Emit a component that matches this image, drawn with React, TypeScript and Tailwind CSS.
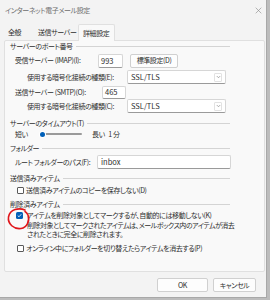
import React from "react";

const F = "[font-family:'Noto_Sans_CJK_JP','Noto_Sans',sans-serif] [font-feature-settings:'palt']";

function Header({ text, mt = 0 }: { text: string; mt?: number }) {
  return (
    <div className="flex items-center h-[10px] gap-[3px] w-[220px]" style={{ marginTop: mt }}>
      <span className="whitespace-nowrap">{text}</span>
      <div className="flex-1 h-px bg-[#d4d4d4]" />
    </div>
  );
}

function Box({ checked = false }: { checked?: boolean }) {
  if (checked)
    return (
      <div className="w-[7px] h-[7px] rounded-[1.5px] bg-[#005fb8] flex items-center justify-center shrink-0">
        <svg width="5" height="5" viewBox="0 0 10 10">
          <path d="M1.5 5.2 L4 7.6 L8.6 2.4" fill="none" stroke="white" strokeWidth="1.6" />
        </svg>
      </div>
    );
  return <div className="w-[7px] h-[7px] rounded-[1px] border border-[#5a5a5a] bg-white shrink-0" />;
}

function Select({ value }: { value: string }) {
  return (
    <div className="w-[99px] h-[14px] bg-white border border-[#d6d6d6] border-b-[#9a9a9a] rounded-[2px] flex items-center justify-between pl-[3px] pr-[3px]">
      <span className="text-[7.5px] tracking-normal">{value}</span>
      <div className="w-[8px] h-[9px] flex items-center justify-center border border-[#e2e2e2] rounded-[1px]">
        <svg width="5" height="4" viewBox="0 0 10 8">
          <path d="M1.5 2 L5 5.5 L8.5 2" fill="none" stroke="#7a7a7a" strokeWidth="1.2" />
        </svg>
      </div>
    </div>
  );
}

export default function App() {
  return (
    <div className={`w-[270px] h-[300px] bg-[#bcbcbc] ${F} text-[7px] tracking-[-0.4px] leading-none text-[#2e2e2e]`}>
      <div className="w-[267px] h-[298px] bg-[#f3f3f3] border-r border-b border-[#a8a8a8] flex flex-col relative">
        {/* title bar */}
        <div className="h-[20px] flex items-center justify-between pl-[5px] pr-[4px]">
          <span className="text-[#6e6e6e] text-[7px] whitespace-nowrap">インターネット電子メール設定</span>
          <svg width="7" height="7" viewBox="0 0 10 10">
            <path d="M1 1 L9 9 M9 1 L1 9" stroke="#8a8a8a" strokeWidth="0.9" />
          </svg>
        </div>
        {/* tabs */}
        <div className="h-[20px] flex items-end pl-[4px]">
          <div className="h-[16px] flex items-center pl-[4px] w-[30px] whitespace-nowrap">全般</div>
          <div className="h-[16px] flex items-center pl-[4px] w-[44px] whitespace-nowrap">送信サーバー</div>
          <div className="h-[17px] w-[37px] flex items-center pl-[4px] bg-[#f9f9f9] border border-b-0 border-[#e0e0e0] rounded-t-[2px] relative top-[1px] z-10 whitespace-nowrap">
            詳細設定
          </div>
        </div>
        {/* panel */}
        <div className="ml-[4px] w-[261px] h-[232px] bg-[#f9f9f9] border border-[#e0e0e0] rounded-[2px] relative">
          <div className="pl-[5px] flex flex-col">
            <Header text="サーバーのポート番号" />
            {/* IMAP */}
            <div className="h-[19px] flex items-center">
              <span className="ml-[5px] w-[83px] whitespace-nowrap">受信サーバー (IMAP)(I):</span>
              <div className="w-[25px] h-[14px] bg-white border border-[#d6d6d6] border-b-[#9a9a9a] rounded-[2px] flex items-center pl-[2px] text-[7.5px] tracking-normal">993</div>
              <div className="ml-[7px] w-[48px] h-[14px] bg-[#fdfdfd] border border-[#d0d0d0] rounded-[2px] flex items-center justify-center whitespace-nowrap">標準設定(D)</div>
            </div>
            <div className="h-[14px] flex items-center">
              <span className="ml-[17px] w-[100px] whitespace-nowrap">使用する暗号化接続の種類(E):</span>
              <Select value="SSL/TLS" />
            </div>
            <div className="h-[16px] flex items-center">
              <span className="ml-[5px] w-[87px] whitespace-nowrap">送信サーバー (SMTP)(O):</span>
              <div className="w-[24px] h-[13px] bg-white border border-[#d6d6d6] border-b-[#9a9a9a] rounded-[2px] flex items-center pl-[2px] text-[7.5px] tracking-normal">465</div>
            </div>
            <div className="h-[12px] flex items-center">
              <span className="ml-[17px] w-[100px] whitespace-nowrap">使用する暗号化接続の種類(C):</span>
              <Select value="SSL/TLS" />
            </div>
            <Header text="サーバーのタイムアウト(T)" mt={6} />
            <div className="h-[12px] flex items-center">
              <span className="ml-[5px] w-[25px]">短い</span>
              <div className="w-[42px] h-[2px] bg-[#9a9a9a] rounded-full flex items-center">
                <div className="w-[5px] h-[5px] rounded-full bg-[#005fb8] ring-1 ring-white" />
              </div>
              <span className="ml-[10px] whitespace-nowrap">長い&nbsp;&nbsp;&nbsp;1&nbsp;分</span>
            </div>
            <Header text="フォルダー" mt={3} />
            <div className="h-[18px] flex items-center">
              <span className="ml-[5px] w-[82px] whitespace-nowrap">ルート フォルダーのパス(F):</span>
              <div className="w-[134px] h-[14px] bg-white border border-[#d6d6d6] border-b-[#9a9a9a] rounded-[2px] flex items-center pl-[3px] text-[7.5px] tracking-normal">inbox</div>
            </div>
            <Header text="送信済みアイテム" mt={2} />
            <div className="h-[14px] flex items-center">
              <div className="ml-[7px]"><Box /></div>
              <span className="ml-[2px] whitespace-nowrap">送信済みアイテムのコピーを保存しない(D)</span>
            </div>
            <Header text="削除済みアイテム" mt={2} />
            <div className="h-[12px] flex items-center">
              <div className="ml-[6px]"><Box checked /></div>
              <span className="ml-[4px] whitespace-nowrap">アイテムを削除対象としてマークするが、自動的には移動しない(K)</span>
            </div>
            <div className="h-[9px] flex items-center">
              <span className="ml-[17px] whitespace-nowrap tracking-[-0.5px]">削除対象としてマークされたアイテムは、メールボックス内のアイテムが消去</span>
            </div>
            <div className="h-[8px] flex items-center">
              <span className="ml-[17px] whitespace-nowrap">されたときに完全に削除されます。</span>
            </div>
            <div className="h-[14px] flex items-center mt-[3px]">
              <div className="ml-[7px]"><Box /></div>
              <span className="ml-[2px] whitespace-nowrap">オンライン中にフォルダーを切り替えたらアイテムを消去する(P)</span>
            </div>
          </div>
          {/* red annotation circle */}
          <svg className="absolute left-[1px] top-[166px]" width="26" height="25" viewBox="0 0 26 25">
            <path d="M19 3 C13 0.5 4 2 2.5 10 C1.5 17 8 22.5 15 21.5 C21 20.5 24 14 22 8 C21 6 20 5 19 4.5" fill="none" stroke="#e0161b" strokeWidth="1.6" strokeLinecap="round" />
          </svg>
        </div>
        {/* buttons */}
        <div className="flex mt-[6px] pl-[157px] gap-[5px]">
          <div className="w-[51px] h-[14px] bg-[#fdfdfd] border border-[#d0d0d0] rounded-[2px] flex items-center justify-center">OK</div>
          <div className="w-[43px] h-[14px] bg-[#fdfdfd] border border-[#d0d0d0] rounded-[2px] flex items-center justify-center whitespace-nowrap">キャンセル</div>
        </div>
      </div>
    </div>
  );
}
